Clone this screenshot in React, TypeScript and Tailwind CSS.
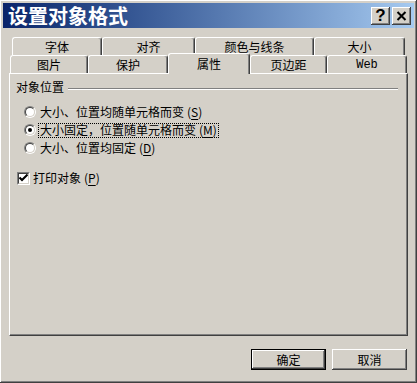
import React from 'react';

const raised =
  'shadow-[inset_-1px_-1px_#404040,inset_1px_1px_#ffffff,inset_-2px_-2px_#808080,inset_2px_2px_#d4d0c8]';

const font = "font-['SimSun','Noto_Sans_CJK_SC',sans-serif]";

const backTabs = [
  { label: '字体', w: 'w-[90px]' },
  { label: '对齐', w: 'w-[93px]' },
  { label: '颜色与线条', w: 'w-[119px]' },
  { label: '大小', w: 'w-[91px]' },
];

const frontTabs = [
  { label: '图片', w: 'w-[78px]' },
  { label: '保护', w: 'w-[80px]' },
  { label: '属性', w: 'w-[82px]', active: true },
  { label: '页边距', w: 'w-[77px]' },
  { label: 'Web', w: 'w-[80px]', mono: true },
];

const radios = [
  { text: '大小、位置均随单元格而变', key: 'S' },
  { text: '大小固定，位置随单元格而变', key: 'M', checked: true },
  { text: '大小、位置均固定', key: 'D' },
];

const Key = ({ k }: { k: string }) => (
  <span className="ml-[3px]">
    (<span className="underline underline-offset-2">{k}</span>)
  </span>
);

const Tab = ({ label, w, active, mono }: { label: string; w: string; active?: boolean; mono?: boolean }) => (
  <div
    className={`${w} ${
      active ? 'relative z-10 -mt-[2px] h-[21px] -mb-[1px]' : 'h-[18px]'
    } flex items-center justify-center bg-[#d4d0c8] border-t border-l border-white border-r border-r-[#404040] rounded-tl-[3px] rounded-tr-[3px] shadow-[inset_-1px_0_#808080] text-[12px] text-black ${
      mono ? "font-['Liberation_Mono',monospace] text-[12px]" : ''
    }`}
  >
    <span className={active ? '-mt-[1px]' : ''}>{label}</span>
  </div>
);

const Radio = ({ checked }: { checked?: boolean }) => (
  <div className="w-[12px] h-[12px] rounded-full border border-t-[#808080] border-l-[#808080] border-b-white border-r-white">
    <div className="w-full h-full rounded-full border border-t-[#404040] border-l-[#404040] border-b-[#d4d0c8] border-r-[#d4d0c8] bg-white flex items-center justify-center">
      {checked && <div className="w-[4px] h-[4px] rounded-full bg-black" />}
    </div>
  </div>
);

export default function App() {
  return (
    <div className={`w-[417px] h-[383px] bg-[#d4d0c8] p-[3px] flex flex-col ${raised} ${font}`}>
      {/* title bar */}
      <div className="h-[25px] bg-gradient-to-r from-[#0a246a] to-[#a6caf0] flex items-center pl-[5px] pr-[3px]">
        <span className="text-white font-bold text-[20px] leading-none flex-1">设置对象格式</span>
        <div className="flex gap-[2px]">
          <div className={`w-[19px] h-[18px] bg-[#d4d0c8] ${raised} flex items-center justify-center`}>
            <span className="font-['Liberation_Sans',sans-serif] font-bold text-[17px] leading-none text-black">?</span>
          </div>
          <div className={`w-[19px] h-[18px] bg-[#d4d0c8] ${raised} flex items-center justify-center`}>
            <svg width="11" height="10" viewBox="0 0 11 10">
              <path d="M1.5 1 L9.5 9 M9.5 1 L1.5 9" stroke="black" strokeWidth="2" />
            </svg>
          </div>
        </div>
      </div>

      <div className="px-[6px] pt-[9px] flex flex-col">
        {/* tabs */}
        <div className="flex ml-[3px]">
          {backTabs.map((t) => (
            <Tab key={t.label} label={t.label} w={t.w} />
          ))}
        </div>
        <div className="flex ml-[1px] items-start">
          {frontTabs.map((t) => (
            <Tab key={t.label} label={t.label} w={t.w} active={t.active} mono={t.mono} />
          ))}
        </div>

        {/* panel */}
        <div className="h-[263px] border border-t-white border-l-white border-r-[#404040] border-b-[#404040] shadow-[inset_-1px_-1px_#808080] pl-[6px] pr-[9px] pt-[7px] text-[12px] text-black">
          <div className="flex items-center h-[12px] leading-none">
            <span>对象位置</span>
            <div className="flex-1 ml-[4px] border-t border-t-[#808080] border-b border-b-white mt-[3px]" />
          </div>

          <div className="mt-[10px] pl-[8px] flex flex-col">
            {radios.map((r) => (
              <div key={r.key} className="h-[18px] flex items-center">
                <Radio checked={r.checked} />
                <div
                  className={`ml-[2px] h-[15px] px-[1px] flex items-center leading-none border border-dotted ${
                    r.checked ? 'border-black' : 'border-transparent'
                  }`}
                >
                  {r.text}
                  <Key k={r.key} />
                </div>
              </div>
            ))}
          </div>

          <div className="mt-[14px] pl-[1px] h-[14px] flex items-center">
            <div className="w-[13px] h-[13px] border border-t-[#808080] border-l-[#808080] border-b-white border-r-white">
              <div className="w-full h-full border border-t-[#404040] border-l-[#404040] border-b-[#d4d0c8] border-r-[#d4d0c8] bg-white flex items-center justify-center">
                <svg width="9" height="8" viewBox="0 0 9 8">
                  <path d="M0.5 3.5 L3 6 L8.5 0.5" stroke="black" strokeWidth="2" fill="none" />
                </svg>
              </div>
            </div>
            <span className="ml-[3px] leading-none">
              打印对象
              <Key k="P" />
            </span>
          </div>
        </div>

        {/* buttons */}
        <div className="mt-[13px] flex justify-end gap-[6px] pr-[1px] text-[12px] text-black">
          <div className="w-[75px] h-[21px] border border-black">
            <div className={`w-full h-full ${raised} flex items-center justify-center`}>确定</div>
          </div>
          <div className={`w-[75px] h-[21px] ${raised} flex items-center justify-center`}>取消</div>
        </div>
      </div>
    </div>
  );
}
